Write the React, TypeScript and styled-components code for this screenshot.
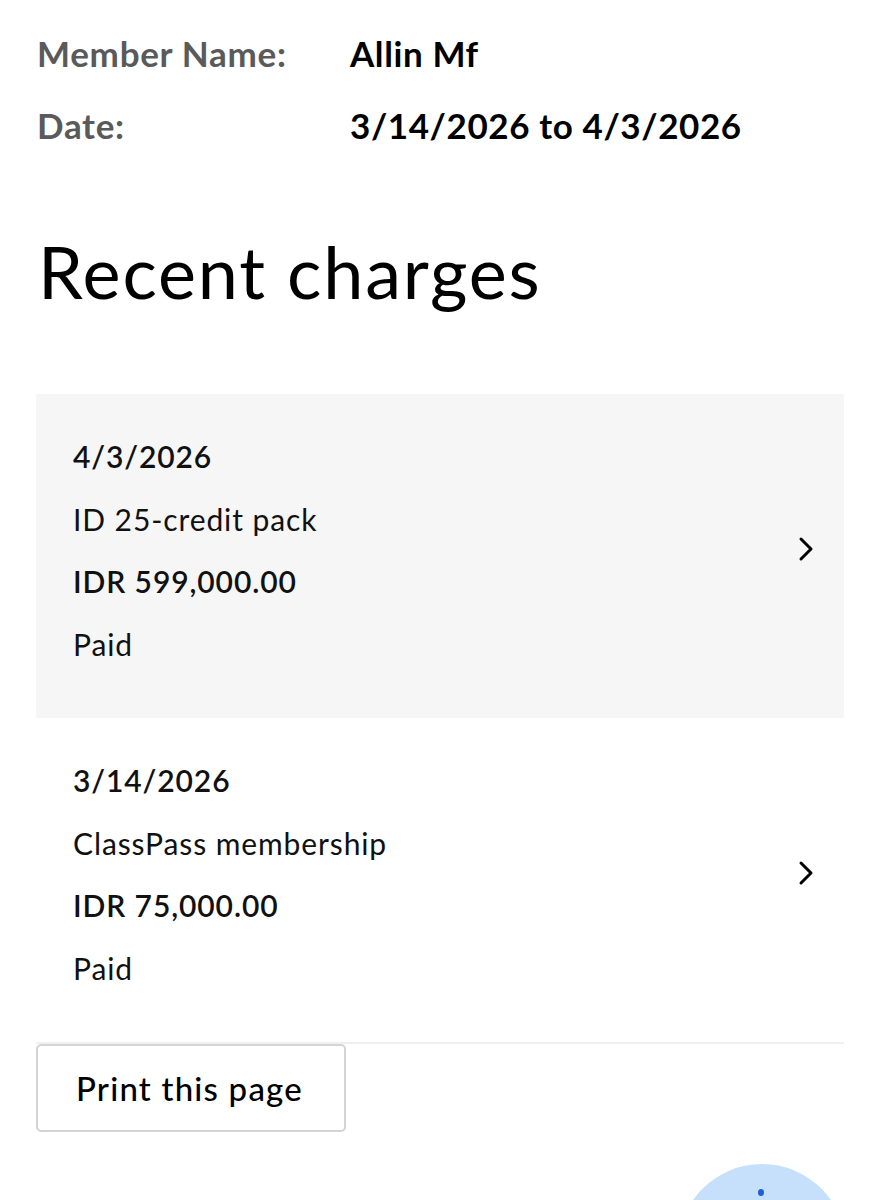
import React from "react";
import styled, { createGlobalStyle } from "styled-components";

const Global = createGlobalStyle`
  html, body { margin: 0; padding: 0; background: #fff; }
  body { font-family: Lato, "Noto Sans", sans-serif; color: #111; }
`;

const Page = styled.div`
  width: 880px;
  height: 1200px;
  position: relative;
  overflow: hidden;
  padding: 32px 36px 0 36px;
  box-sizing: border-box;
`;

const InfoGrid = styled.div`
  display: grid;
  grid-template-columns: 313px 1fr;
  row-gap: 30px;
  padding-left: 1px;
`;

const InfoLabel = styled.div`
  font-size: 35px;
  line-height: 42px;
  font-weight: 700;
  letter-spacing: 0.7px;
  color: #5a5a5a;
`;

const InfoValue = styled.div`
  font-size: 35px;
  line-height: 42px;
  font-weight: 700;
  letter-spacing: 0.6px;
  color: #000;
`;

const Heading = styled.h1`
  margin: 80px 0 0 2px;
  font-size: 72px;
  line-height: 90px;
  font-weight: 400;
  letter-spacing: 1.8px;
  color: #000;
`;

const List = styled.div`
  margin-top: 78px;
  display: flex;
  flex-direction: column;
  border-bottom: 2px solid #f0f0f0;
`;

const Row = styled.div<{ $shaded?: boolean }>`
  height: 324px;
  display: flex;
  align-items: center;
  justify-content: space-between;
  padding: 0 28px 0 37px;
  box-sizing: border-box;
  background: ${(p) => (p.$shaded ? "#f6f6f6" : "#fff")};
`;

const Details = styled.div`
  display: flex;
  flex-direction: column;
  margin-top: -12px;
`;

const Line = styled.div<{ $strong?: boolean }>`
  font-size: 30px;
  line-height: 62.5px;
  letter-spacing: 0.9px;
  font-weight: ${(p) => (p.$strong ? 600 : 400)};
  color: #111;
`;

const Chevron = styled.svg`
  width: 20px;
  height: 26px;
  margin-top: -14px;
`;

const PrintButton = styled.button`
  margin-top: 0;
  width: 310px;
  height: 88px;
  background: #fff;
  border: 2px solid #d4d4d4;
  border-radius: 5px;
  font-family: Lato, "Noto Sans", sans-serif;
  font-size: 33px;
  font-weight: 500;
  letter-spacing: 1.2px;
  color: #000;
  text-align: left;
  padding: 0 0 0 38px;
  box-sizing: border-box;
`;

const Fab = styled.div`
  position: absolute;
  left: 678px;
  top: 1164px;
  width: 168px;
  height: 168px;
  border-radius: 50%;
  background: #c6e0fb;
`;

const FabDot = styled.div`
  position: absolute;
  left: 80px;
  top: 25px;
  width: 6px;
  height: 7px;
  border-radius: 50%;
  background: #1b5fd8;
`;

const charges = [
  { date: "4/3/2026", desc: "ID 25-credit pack", amount: "IDR 599,000.00", status: "Paid" },
  { date: "3/14/2026", desc: "ClassPass membership", amount: "IDR 75,000.00", status: "Paid" },
];

export default function App() {
  return (
    <>
      <Global />
      <Page>
        <InfoGrid>
          <InfoLabel>Member Name:</InfoLabel>
          <InfoValue>Allin Mf</InfoValue>
          <InfoLabel>Date:</InfoLabel>
          <InfoValue>3/14/2026 to 4/3/2026</InfoValue>
        </InfoGrid>
        <Heading>Recent charges</Heading>
        <List>
          {charges.map((c, i) => (
            <Row key={c.date} $shaded={i === 0}>
              <Details>
                <Line $strong>{c.date}</Line>
                <Line>{c.desc}</Line>
                <Line $strong>{c.amount}</Line>
                <Line>{c.status}</Line>
              </Details>
              <Chevron viewBox="0 0 20 26" fill="none">
                <path d="M5 3 L15 13 L5 23" stroke="#000" strokeWidth="3" strokeLinecap="round" strokeLinejoin="round" />
              </Chevron>
            </Row>
          ))}
        </List>
        <PrintButton>Print this page</PrintButton>
        <Fab>
          <FabDot />
        </Fab>
      </Page>
    </>
  );
}
